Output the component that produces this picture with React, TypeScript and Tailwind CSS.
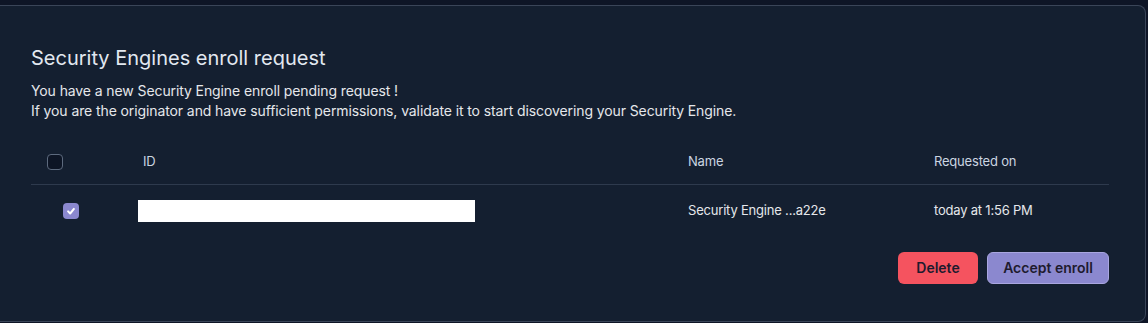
import React from 'react';

const columns = 'grid grid-cols-[107px_550px_246px_1fr] items-center';

export default function App() {
  return (
    <div className="h-[323px] w-[1148px] bg-[#0e1526] pt-[5px] pr-[2px] pb-[1px] font-['Inter',sans-serif]">
      <div className="h-full rounded-r-lg border border-l-0 border-[#3a4558] bg-[#141f30] pl-[31px] pr-[36px] pt-[38px]">
        <h2 className="text-xl leading-7 text-[#e2e8f0]">Security Engines enroll request</h2>
        <div className="mt-[9px] text-sm leading-5 tracking-[-0.1px] text-[#e5e7eb]">
          <p>You have a new Security Engine enroll pending request !</p>
          <p>If you are the originator and have sufficient permissions, validate it to start discovering your Security Engine.</p>
        </div>

        {/* table */}
        <div className="mt-[18px] tracking-[-0.2px]">
          <div className={`${columns} h-[46px] border-b border-[#2e3a4d] text-[13px] text-[#cbd5e1]`}>
            <div className="pl-4">
              <div className="h-4 w-4 rounded-[4px] border border-[#5d6a7e] bg-[#0d1525]"></div>
            </div>
            <span className="pl-[5px]">ID</span>
            <span>Name</span>
            <span>Requested on</span>
          </div>
          <div className={`${columns} h-[52px] text-[13px] text-[#e5e7eb]`}>
            <div className="pl-8">
              <div className="flex h-4 w-4 items-center justify-center rounded-[4px] bg-[#8b88cf]">
                <svg className="h-[10px] w-[10px]" viewBox="0 0 12 12" fill="none" stroke="white" strokeWidth="2.4" strokeLinecap="round" strokeLinejoin="round">
                  <polyline points="2.5 6.5 5 9 9.5 3.5" />
                </svg>
              </div>
            </div>
            <div>
              <div className="h-[22px] w-[337px] bg-white"></div>
            </div>
            <span>Security Engine ...a22e</span>
            <span>today at 1:56 PM</span>
          </div>
        </div>

        <div className="mt-[15px] flex justify-end gap-[9px]">
          <button className="h-8 w-20 rounded-md bg-[#f5535f] text-sm font-semibold text-[#1e1b2e]">Delete</button>
          <button className="h-8 w-[122px] rounded-md border border-[#a9a6e0] bg-[#8b88cf] text-sm font-semibold text-[#1e1b2e]">Accept enroll</button>
        </div>
      </div>
    </div>
  );
}
